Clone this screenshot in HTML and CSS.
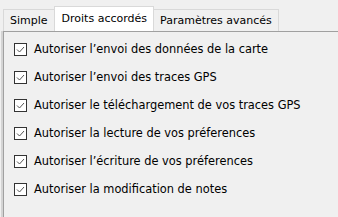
FILE: index.html
```html
<!DOCTYPE html>
<html lang="fr">
<head>
    <meta charset="UTF-8">
    <title>Droits accordés</title>
    <link rel="stylesheet" href="styles.css">
</head>
<body>
    <div class="tabs">
        <div class="tab">Simple</div>
        <div class="tab active">Droits accordés</div>
        <div class="tab">Paramètres avancés</div>
    </div>
    <div class="panel">
        <label class="row"><span class="box"><svg viewBox="0 0 11 11"><path d="M2 5.5 L4.5 8 L9 3"/></svg></span>Autoriser l’envoi des données de la carte</label>
        <label class="row"><span class="box"><svg viewBox="0 0 11 11"><path d="M2 5.5 L4.5 8 L9 3"/></svg></span>Autoriser l’envoi des traces GPS</label>
        <label class="row"><span class="box"><svg viewBox="0 0 11 11"><path d="M2 5.5 L4.5 8 L9 3"/></svg></span>Autoriser le téléchargement de vos traces GPS</label>
        <label class="row"><span class="box"><svg viewBox="0 0 11 11"><path d="M2 5.5 L4.5 8 L9 3"/></svg></span>Autoriser la lecture de vos préferences</label>
        <label class="row"><span class="box"><svg viewBox="0 0 11 11"><path d="M2 5.5 L4.5 8 L9 3"/></svg></span>Autoriser l’écriture de vos préferences</label>
        <label class="row"><span class="box"><svg viewBox="0 0 11 11"><path d="M2 5.5 L4.5 8 L9 3"/></svg></span>Autoriser la modification de notes</label>
    </div>
</body>
</html>
```

FILE: styles.css
```css
body {
    margin: 0;
    background-color: #f0f0f0;
    font-family: "DejaVu Sans", sans-serif;
    font-size: 11.4px;
    color: #000;
    overflow: hidden;
}

.tabs {
    display: flex;
    align-items: flex-end;
    height: 31px;
    padding-left: 3px;
    font-size: 11px;
}

.tab {
    height: 22px;
    line-height: 22px;
    padding: 0 6px;
    border: 1px solid #d9d9d9;
    border-bottom: none;
    box-sizing: border-box;
}

.tab.active {
    height: 25px;
    line-height: 24px;
    padding: 0 6px 0 7px;
    background-color: #fff;
}

.tabs .tab + .tab {
    margin-left: -1px;
}

.panel {
    margin-left: 3px;
    height: 186px;
    padding: 3px 0 0 10px;
    border-top: 1px solid #a0a0a0;
    border-left: 1px solid #a0a0a0;
    box-shadow: -2px 0 0 #d4d4d4;
}

.row {
    display: flex;
    align-items: center;
    height: 28px;
    gap: 7px;
}

.box {
    width: 13px;
    height: 13px;
    box-sizing: border-box;
    border: 1px solid #333;
    background-color: #fff;
}

.box svg {
    display: block;
    width: 11px;
    height: 11px;
}

.box path {
    fill: none;
    stroke: #555;
    stroke-width: 1;
}
```
